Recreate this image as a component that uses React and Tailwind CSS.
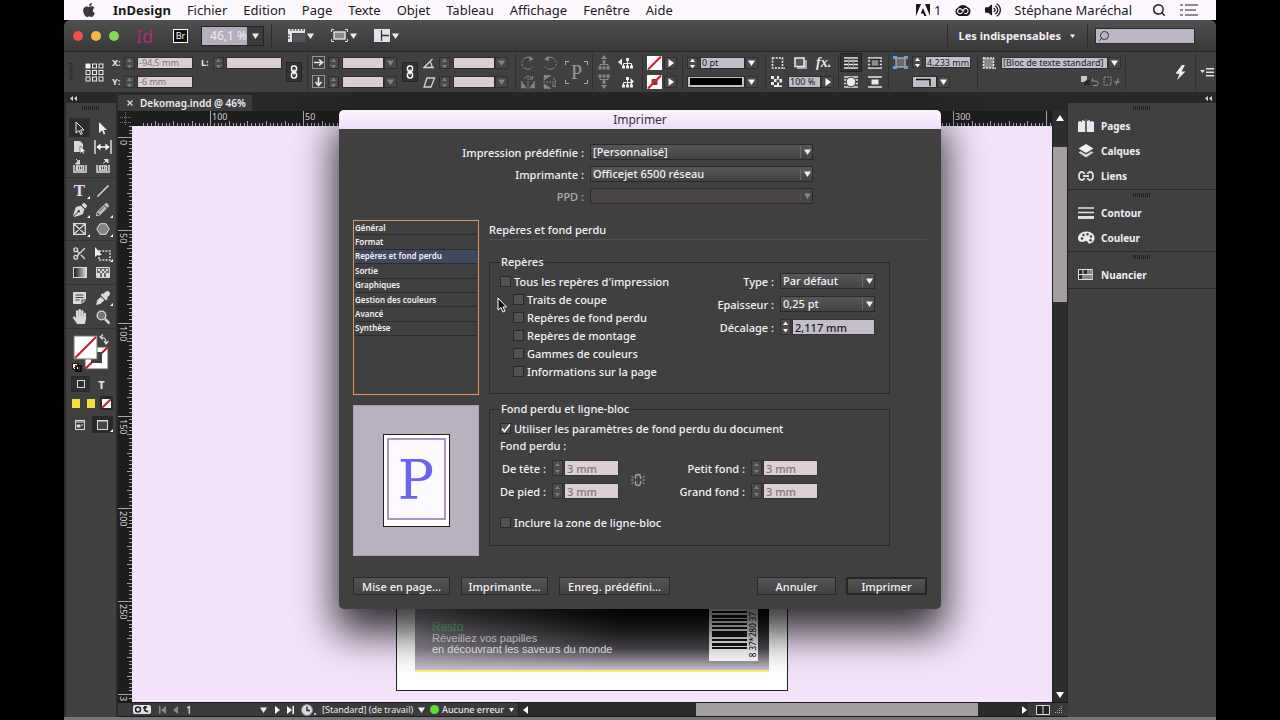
import React from "react";
import { FaApple, FaVolumeUp, FaPenNib, FaPencilAlt, FaHandPaper, FaEyeDropper } from "react-icons/fa";
import { Scissors, Search } from "lucide-react";

/* ---------- small building blocks ---------- */

const Svg = ({ w = 14, h = 14, vb, className = "", children }) => (
  <svg width={w} height={h} viewBox={vb || `0 0 ${w} ${h}`} className={"block shrink-0 " + className} aria-hidden="true">
    {children}
  </svg>
);

const Down = ({ className = "fill-[#f1ecf3]" }) => (
  <Svg w={7} h={6} className={className}><path d="M0 0.5h7L3.5 6z" /></Svg>
);

const Stepper = ({ dim, label, tall }) => (
  <div className={"flex w-[11px] shrink-0 flex-col gap-px border border-[#2e2e2e] bg-[#4a4a4a] " + (tall ? "h-4" : "h-3")}>
    {["M0 4h5L2.5 0.5z", "M0 1h5L2.5 4.5z"].map((d, i) => (
      <button key={d} type="button" aria-label={`${label} ${i ? "moins" : "plus"}`} className="flex flex-1 items-center justify-center">
        <Svg w={5} h={5} className={dim ? "fill-[#7d7d7d]" : "fill-white"}><path d={d} /></Svg>
      </button>
    ))}
  </div>
);

const Field = ({ label, value = "", dim, className = "" }) => (
  <input
    aria-label={label}
    defaultValue={value}
    className={
      "h-3 min-w-0 rounded-none border border-[#2f2d30] px-px text-[9px] leading-none outline-none " +
      (dim ? "bg-[#dccfd3] text-[#7e747e] " : "bg-[#c4bdcb] text-[#1b1b1b] ") + className
    }
  />
);

const ArrowBtn = ({ label, dim, right }) => (
  <button type="button" aria-label={label} className="flex h-3 w-[13px] shrink-0 items-center justify-center border border-[#303030] bg-[#484848]">
    {right ? (
      <Svg w={6} h={8} className="fill-white"><path d="M0.5 0v8L6 4z" /></Svg>
    ) : (
      <Down className={dim ? "fill-[#858085]" : "fill-white"} />
    )}
  </button>
);

const Combo = ({ label, value, dim, width = "w-[55px]", right }) => (
  <div className={"flex shrink-0 " + width}>
    <Field label={label} value={value} dim={dim} className="flex-1" />
    <ArrowBtn label={`${label} options`} dim={dim} right={right} />
  </div>
);

const Section = ({ className = "", children }) => (
  <div className={"flex h-9 shrink-0 items-center border-l border-[#2f2f2f] " + className}>{children}</div>
);
const Col = ({ children }) => <div className="flex flex-col gap-[7px]">{children}</div>;
const Row = ({ children, className = "gap-[2px]" }) => <div className={"flex h-3 items-center " + className}>{children}</div>;

const ChainBtn = ({ label }) => (
  <button type="button" aria-label={label} className="flex h-5 w-4 shrink-0 items-center justify-center border border-[#262626] bg-[#333]">
    <Svg w={8} h={14} className="fill-none stroke-white">
      <rect x="1.5" y="1" width="5" height="5.5" rx="2.2" strokeWidth="1.5" />
      <rect x="1.5" y="7.5" width="5" height="5.5" rx="2.2" strokeWidth="1.5" />
      <path d="M4 4.5v5" strokeWidth="1.5" />
    </Svg>
  </button>
);

/* ---------- menu bar ---------- */

const MENUS = ["Fichier", "Edition", "Page", "Texte", "Objet", "Tableau", "Affichage", "Fenêtre", "Aide"];

function MenuBar() {
  return (
    <header className="flex h-5 shrink-0 items-center bg-[#fdf8fe] pr-[18px] pl-[17px] text-[13px] leading-none text-[#1a1a1a]">
      <FaApple className="h-4 w-4 shrink-0 text-[#3a3a3a]" />
      <nav className="ml-4 flex items-center gap-4">
        <a href="#app" className="font-bold">InDesign</a>
        {MENUS.map((m) => <a key={m} href={"#" + m}>{m}</a>)}
      </nav>
      <div className="ml-auto flex items-center gap-[13px]">
        <span className="flex items-center gap-1">
          <Svg w={14} h={12}>
            <path d="M0 0h5L0 12zM9 0h5v12zM7 4l3.500 8h-2.300l-1-2.400h-2.500z" fill="#1a1a1a" />
          </Svg>
          1
        </span>
        <Svg w={18} h={13} className="fill-none stroke-[#1a1a1a]">
          <path d="M5.500 12A4.500 4.500 0 0 1 4 3.500 6 6 0 0 1 13.500 3 4.700 4.700 0 0 1 12.500 12z" fill="#1a1a1a" stroke="none" />
          <path d="M10 7.500L7.500 5.300a2.400 2.400 0 1 0 0 3.700l1-.8M8 7l2-1.900a2.500 2.500 0 1 1 .5 4.200" stroke="#fdf8fe" strokeWidth="1.100" />
        </Svg>
        <FaVolumeUp className="h-4 w-4" />
        <span>Stéphane Maréchal</span>
      </div>
      <Search className="ml-5 h-[14px] w-[14px]" strokeWidth={2.5} />
      <Svg w={18} h={12} className="ml-[14px] fill-[#8f8a93]">
        <path d="M0 0h3v2H0zM5 0h13v2H5zM0 5h3v2H0zM5 5h11v2H5zM0 10h3v2H0zM5 10h13v2H5z" />
      </Svg>
    </header>
  );
}

/* ---------- application bar ---------- */

function AppBar() {
  return (
    <div className="flex h-8 shrink-0 items-center rounded-t-md border-b border-[#262626] bg-linear-to-b from-[#505050] to-[#383838] pr-[21px] pl-[9px]">
      <div className="flex gap-2">
        <button aria-label="Fermer" type="button" className="h-[10px] w-[10px] rounded-full bg-[#f0514c]" />
        <button aria-label="Réduire" type="button" className="h-[10px] w-[10px] rounded-full bg-[#f5b745]" />
        <button aria-label="Agrandir" type="button" className="h-[10px] w-[10px] rounded-full bg-[#83d95b]" />
      </div>
      <span className="ml-[17px] w-[37px] text-[18px] leading-none text-[#b02c74]">Id</span>
      <button type="button" className="flex h-[14px] w-[15px] items-center justify-center border border-white bg-[#111] text-[9px] leading-none text-white">Br</button>
      <div className="ml-[13px] flex h-5 w-[63px] border border-[#232323]">
        <input aria-label="Zoom" defaultValue="46,1 %" className="w-0 flex-1 bg-[#b5aebd] text-right text-[12px] leading-none text-[#eee9f2] outline-none" />
        <button type="button" aria-label="Liste des zooms" className="flex w-4 items-center justify-center bg-[#3c3c3c]"><Down /></button>
      </div>
      <div className="ml-[7px] flex h-6 items-center gap-[17px] border-l border-[#2c2c2c] pl-4">
        <button type="button" aria-label="Options d'affichage" className="flex items-center gap-[2px]">
          <Svg w={17} h={13}>
            <path d="M0 0h17v4H4v9H0z" fill="#e6e1ea" />
            <path d="M5 5h12v8H5z" fill="#57555a" />
            <path d="M3 0v2M6 0v2M9 0v2M12 0v2M15 0v2M0 6h2M0 9h2" stroke="#333" />
          </Svg>
          <Down />
        </button>
        <button type="button" aria-label="Mode d'écran" className="flex items-center gap-[2px]">
          <Svg w={17} h={13} className="fill-none stroke-[#e6e1ea]">
            <path d="M0.500 3V0.500H3M14 0.500h2.500V3M16.500 10v2.500H14M3 12.500H0.500V10" />
            <rect x="3" y="3" width="11" height="7" fill="#8a878d" strokeWidth="1.400" />
          </Svg>
          <Down />
        </button>
        <button type="button" aria-label="Réorganiser les documents" className="flex items-center gap-[2px]">
          <Svg w={16} h={13}>
            <path d="M0 0h16v13H0z" fill="#e6e1ea" />
            <path d="M7.500 1v11M8 6.500h7" stroke="#333" strokeWidth="1.300" />
          </Svg>
          <Down />
        </button>
      </div>
      <div className="ml-auto flex h-6 items-center border-l border-[#2c2c2c] pl-[11px]">
        <button type="button" className="flex items-center gap-[9px] text-[11px] leading-none font-bold text-[#f3eff5]">
          Les indispensables
          <Svg w={5} h={4} className="fill-white"><path d="M0 0.500h5L2.500 4z" /></Svg>
        </button>
      </div>
      <div className="ml-3 flex h-6 items-center border-l border-[#2c2c2c] pl-[7px]">
        <label className="flex h-4 w-[100px] items-center border border-[#2b2b2b] bg-[#bcb5c4] pl-[2px]">
          <Search className="h-3 w-3 -scale-x-100 text-[#333]" strokeWidth={2} />
          <input aria-label="Rechercher" className="w-0 flex-1 bg-transparent text-[10px] outline-none" />
        </label>
      </div>
    </div>
  );
}

/* ---------- control bar ---------- */

const Tree = ({ dim, arrow }) => (
  <Svg w={16} h={12} className={dim ? "fill-[#8b878c] stroke-[#8b878c]" : "fill-[#f3eef5] stroke-[#f3eef5]"}>
    <path d="M9.500 3v3M5.500 9V6.500h8V9M9.500 6v3" fill="none" />
    <path d="M8 1h3v3H8zM4 8.500h3v3H4zM8 8.500h3v3H8zM12 8.500h3v3h-3z" stroke="none" />
    {arrow === "left" && <path d="M0 5l4-3.500v7z" stroke="none" />}
    {arrow === "right" && <path d="M16 5.500l-3.500-3.500v7z" stroke="none" />}
  </Svg>
);

const TreeUp = ({ flip }) => (
  <Svg w={12} h={15} className={"fill-[#8b878c] stroke-[#8b878c] " + (flip ? "rotate-180" : "")}>
    <path d="M6 5v4M2 12V9.500h8V12" fill="none" />
    <path d="M3 4l3-4 3 4zM4.500 5.500h3v3h-3zM0.500 11.500h3v3h-3zM4.500 11.500h3v3h-3zM8.500 11.500h3v3h-3z" stroke="none" />
  </Svg>
);

const Rotate = ({ flip }) => (
  <Svg className={"fill-none stroke-[#8b878c] " + (flip ? "" : "-scale-x-100")}>
    <path d="M4 2.300A6 6 0 1 1 2 10.500" strokeDasharray="8 1.500 2 1.500 2 1.500" />
    <path d="M5.500 0L1.500 3l4 2.500z" fill="#8b878c" stroke="none" />
  </Svg>
);

const Flip = ({ vertical }) => (
  <Svg className={"fill-[#8b878c] stroke-[#8b878c] " + (vertical ? "rotate-90" : "")}>
    <path d="M7 3v11" strokeDasharray="2 1" fill="none" />
    <path d="M0.500 13V6l4.500 7zM13.500 13V6l-4.500 7z" strokeWidth="0.600" />
    <path d="M3 4A4.500 4.500 0 0 1 11 3.500M11.500 1v3h-3" fill="none" />
  </Svg>
);

const NoneSwatch = ({ dot }) => (
  <button type="button" aria-label={dot ? "Contour" : "Fond"} className="shrink-0">
    <Svg w={15} h={14}>
      <path d="M0 0h15v14H0z" fill="#fff" />
      <path d="M1 13.500L14 0.500" stroke="#d0182c" strokeWidth="2" />
      {dot && <path d="M5 4.500h5v5H5z" fill="#8d3a46" stroke="#d0182c" />}
    </Svg>
  </button>
);

const WrapIcon = ({ kind }) => (
  <Svg w={14} h={12}>
    <path d="M0 1h14M0 4h14M0 7.500h14M0 11h14" stroke="#e9e4ec" strokeWidth="1.400" />
    {kind === "bars" && <path d="M4.500 1v10M9.500 1v10" stroke="#8f8b91" />}
    {kind === "box" && <path d="M3 2.500h8v7H3z" fill="#8d8a90" stroke="#2a2a2a" strokeWidth="1.500" />}
    {kind === "round" && <circle cx="7" cy="6" r="4.800" fill="#f0ebf3" stroke="#3a3a3a" />}
    {kind === "jump" && <path d="M0 2.500h14v7H0z" fill="#404040" />}
    {kind === "jump" && <path d="M3.500 3.500h7v5h-7z" fill="#efeaf2" />}
  </Svg>
);

const DashedSquare = ({ fill = "none" }) => (
  <Svg w={14} h={12}>
    <rect x="1.500" y="1" width="10" height="10" fill={fill} stroke="#f0ebf3" strokeWidth="1.500" strokeDasharray="2 1.200" />
    <circle cx="13.200" cy="11.200" r="0.800" fill="#fff" />
  </Svg>
);

function ControlBar() {
  const pos = (x, y) => <rect key={`${x}-${y}`} x={1 + x * 6.5} y={1 + y * 6.5} width="4" height="4" fill={x + y === 0 ? "#fff" : "none"} stroke="#eee9f0" />;
  return (
    <div className="flex h-[41px] shrink-0 items-center overflow-hidden border-b border-[#2a2a2a] bg-[#404040] text-[9px] text-[#eae6ec]">
      <div className="flex w-[243px] shrink-0 items-center gap-2 pl-[5px]">
        <Svg w={8} h={18}><path d="M2 0v18" stroke="#262626" strokeDasharray="1 1" strokeWidth="3" /></Svg>
        <Svg w={19} h={19}>{[0, 1, 2].flatMap((x) => [0, 1, 2].map((y) => pos(x, y)))}</Svg>
        <Col>
          <Row><span className="w-[10px] font-bold">X:</span><Stepper dim label="X" /><Field dim label="X" value="-94,5 mm" className="w-14" /></Row>
          <Row><span className="w-[10px] font-bold">Y:</span><Stepper dim label="Y" /><Field dim label="Y" value="-6 mm" className="w-14" /></Row>
        </Col>
        <div className="flex items-center gap-1">
          <Col>
            <Row><span className="w-[10px] font-bold">L:</span><Stepper dim label="L" /><Field dim label="L" className="w-14" /></Row>
            <Row />
          </Col>
          <ChainBtn label="Lier les dimensions" />
        </div>
      </div>

      <Section className="w-[208px] gap-[5px] pl-1">
        <Col>
          {["M2 6.500h7M7 3.500l3.500 3L7 9.500", "M6.500 2v7M3.500 7l3 3.500L9.500 7"].map((d, i) => (
            <Row key={d} className="gap-[3px]">
              <Svg w={13} h={13} className="fill-none stroke-[#eee9f0]">
                <rect x="0.500" y="0.500" width="12" height="12" strokeDasharray="1 1" />
                <path d={d} strokeWidth="1.600" />
              </Svg>
              <Stepper dim label={i ? "Échelle Y" : "Échelle X"} />
              <Combo dim label={i ? "Échelle Y" : "Échelle X"} />
            </Row>
          ))}
        </Col>
        <ChainBtn label="Lier les échelles" />
        <Col>
          {["M11 10.500H1L9.500 2M6.500 5c2 1 2.500 3 2.500 5.500", "M4 2h7.500L8 11H1z"].map((d, i) => (
            <Row key={d} className="gap-[3px]">
              <Svg w={13} h={12} className="fill-none stroke-[#d8d3da]"><path d={d} strokeWidth="1.300" /></Svg>
              <Stepper dim label={i ? "Inclinaison" : "Rotation"} />
              <Combo dim label={i ? "Inclinaison" : "Rotation"} />
            </Row>
          ))}
        </Col>
      </Section>

      <Section className="w-[77px] gap-2 pl-[5px]">
        <Col><Row><Rotate /></Row><Row><Flip /></Row></Col>
        <Col><Row><Rotate flip /></Row><Row><Flip vertical /></Row></Col>
        <div className="relative flex h-[23px] w-[23px] items-center justify-center">
          <Svg w={23} h={23} className="absolute fill-none stroke-[#b5b0b7]"><path d="M0.500 4V0.500H4M19 0.500h3.500V4M22.500 19v3.500H19M4 22.500H0.500V19" /></Svg>
          <span className="font-['Liberation_Serif',serif] text-[20px] leading-none text-[#9c989e]">P</span>
        </div>
      </Section>

      <Section className="w-[50px] gap-2 pl-[5px]">
        <Col><Row><TreeUp /></Row><Row><TreeUp flip /></Row></Col>
        <Col><Row><Tree arrow="left" /></Row><Row><Tree arrow="right" /></Row></Col>
      </Section>

      <Section className="w-10 pl-1">
        <Col>
          <Row><NoneSwatch /><ArrowBtn right label="Options du fond" /></Row>
          <Row><NoneSwatch dot /><ArrowBtn right label="Options du contour" /></Row>
        </Col>
      </Section>

      <Section className="w-[83px] pl-1">
        <Col>
          <Row><Stepper label="Épaisseur du contour" /><Combo label="Épaisseur du contour" value="0 pt" width="w-[58px]" /></Row>
          <Row className="">
            <button type="button" aria-label="Style de contour" className="flex h-3 w-[58px] items-center border border-[#2f2d30] bg-[#c4bdcb] px-[2px]">
              <span className="h-[7px] w-full bg-black" />
            </button>
            <ArrowBtn label="Types de contour" />
          </Row>
        </Col>
      </Section>

      <Section className="w-[73px] pl-[5px]">
        <Col>
          <Row className="gap-[9px]">
            <DashedSquare />
            <Svg w={13} h={12}><path d="M3 3h10v9H3z" fill="#a9a5ac" /><rect x="1" y="1" width="9" height="8.500" fill="#57555a" stroke="#f0ebf3" strokeWidth="1.500" /></Svg>
            <span className="font-['Liberation_Serif',serif] text-[14px] leading-none font-bold italic">fx.</span>
          </Row>
          <Row className="gap-[6px]">
            <Svg w={11} h={11}><path d="M0 0h11v11H0z" fill="#eee" /><path d="M3 0h3v3H3zM8 0h3v3H8zM0 3h3v3H0zM5.500 3.500h3v3h-3zM3 6h3v3H3zM8 6.500h3v3H8zM0 9h3v2H0z" fill="#444" /></Svg>
            <Combo right label="Opacité" value="100 %" width="w-[46px]" />
          </Row>
        </Col>
      </Section>

      <Section className="w-[50px] pl-px">
        <div className="grid grid-cols-2 justify-items-center gap-x-[2px]">
          {["bars", "box", "round", "jump"].map((k, i) => (
            <button key={k} type="button" aria-label={"Habillage " + (i + 1)} className={"flex h-[19px] w-[22px] items-center justify-center " + (i ? "" : "border border-[#222] bg-[#303030]")}>
              <WrapIcon kind={k} />
            </button>
          ))}
        </div>
      </Section>

      <Section className="w-[89px] pl-1">
        <div className="grid grid-cols-[19px_1fr] gap-y-[7px]">
          <Svg w={15} h={13}>
            <rect x="3" y="2" width="9" height="9" fill="#6c696e" stroke="#cfc9d3" />
            <path d="M0 0h4v3H0zM11 0h4v3h-4zM0 10h4v3H0zM11 10h4v3h-4z" fill="#58a6e6" />
          </Svg>
          <Row><Stepper label="Taille d'angle" /><Field label="Taille d'angle" value="4,233 mm" className="w-[46px]" /></Row>
          <span />
          <Row className="">
            <button type="button" aria-label="Forme d'angle" className="h-3 border border-[#2f2d30] bg-[#c4bdcb] px-[2px]">
              <Svg w={19} h={10}><path d="M1 2.500h14V9" fill="none" stroke="#111" strokeWidth="1.500" /></Svg>
            </button>
            <ArrowBtn label="Formes d'angle" />
          </Row>
        </div>
      </Section>

      <Section className="w-[148px] pl-1">
        <Col>
          <Row className="gap-[5px]">
            <DashedSquare fill="#8c888f" />
            <Combo label="Style d'objet" value="[Bloc de texte standard]" width="w-[120px]" />
          </Row>
          <Row className="justify-end gap-1">
            <Svg w={18} h={11}><path d="M0 0h6v6H0z" fill="#c9c4cc" /><path d="M6 4h3v5H3V6" fill="#2a2a2a" /><path d="M12 2l-1 3h4a2 2 0 0 1 0 4.500h-3" fill="none" stroke="#99959b" /></Svg>
            <Svg w={18} h={11}><rect x="1" y="1" width="7" height="8" fill="none" stroke="#99959b" strokeDasharray="2 1" /><path d="M11 6h6M13 9l2.500-7" stroke="#99959b" fill="none" /></Svg>
          </Row>
        </Col>
      </Section>

      <Section className="min-w-0 flex-1 shrink justify-end pr-2">
        <button type="button" aria-label="Application rapide">
          <Svg w={12} h={15} className="fill-[#f3eef5]"><path d="M7 0L0.500 8.500l4 .5L2 15l8.500-8.500H6.500L10 0z" /></Svg>
        </button>
      </Section>
      <Section className="w-[21px] pl-1">
        <button type="button" aria-label="Menu du panneau">
          <Svg w={14} h={9} className="fill-[#e6e1e8]"><path d="M0 2h5L2.500 5zM6 0h8v1.500H6zM6 3.500h8V5H6zM6 7h8v1.500H6z" /></Svg>
        </button>
      </Section>
    </div>
  );
}

/* ---------- tools panel ---------- */

const PanelHead = ({ right }) => (
  <div className={"flex h-[10px] shrink-0 items-center bg-[#282828] px-1 " + (right ? "justify-end" : "")}>
    <button type="button" aria-label="Réduire le panneau"><Svg w={7} h={5} className="fill-[#d9d4db]"><path d="M3 0v5L0 2.500zM7 0v5L4 2.500z" /></Svg></button>
  </div>
);

const Grip = () => (
  <Svg w={18} h={4}><path d="M0 2h18" stroke="#1f1f1f" strokeWidth="4" strokeDasharray="1 1" /></Svg>
);

const ink = "#ddd7e0";
const TOOLS = [
  [
    ["Sélection", true, false, <Svg w={10} h={14}><path d="M1 1v11l3-2.500 1.800 4 1.500-.8L5.700 9H9z" fill="#2f2f2f" stroke="#eee" /></Svg>],
    ["Sélection directe", false, false, <Svg w={10} h={14}><path d="M1 1v11l3-2.500 1.800 4 1.500-.8L5.700 9H9z" fill="#eee" /></Svg>],
    ["Page", false, false, <Svg><path d="M1 1h6l3 3v8H1z" fill={ink} /><path d="M7 6v7.500l2-1.500 1 2 1.500-.6-1-2h2.500z" fill="#fff" stroke="#333" strokeWidth="0.600" /></Svg>],
    ["Écart", false, false, <Svg w={18}><path d="M1 0v14M17 0v14" stroke={ink} strokeWidth="1.500" /><path d="M3 7h12" stroke="#fff" strokeWidth="1.500" /><path d="M2.500 7l4-3.500v7zM15.500 7l-4-3.500v7z" fill="#fff" /></Svg>],
    ["Collecteur", false, false, <Svg><path d="M1 6v7h12V6M3.500 7h7v4h-7z" fill="none" stroke={ink} strokeWidth="1.500" /><path d="M4 9h6" stroke={ink} strokeDasharray="1 1" strokeWidth="3" /><path d="M3 0l2 2M6.500 1v4H2.500z" fill={ink} stroke={ink} /></Svg>],
    ["Placeur", false, false, <Svg><path d="M1 6v7h12V6M3.500 7h7v4h-7z" fill="none" stroke={ink} strokeWidth="1.500" /><path d="M4 9h6" stroke={ink} strokeDasharray="1 1" strokeWidth="3" /><path d="M12 0v4L8 0zM7 4.500l3-2.500" fill={ink} stroke={ink} /></Svg>],
  ],
  [
    ["Texte", false, true, <span className="font-['Liberation_Serif',serif] text-[17px] leading-none font-bold text-[#e3dee6]">T</span>],
    ["Trait", false, false, <Svg w={12} h={12}><path d="M0.500 11.500l11-11" stroke={ink} strokeWidth="1.500" /></Svg>],
    ["Plume", false, true, <FaPenNib className="h-[14px] w-[14px] text-[#ddd7e0]" />],
    ["Crayon", false, true, <FaPencilAlt className="h-[13px] w-[13px] text-[#c4bfc7]" />],
    ["Bloc rectangulaire", false, true, <Svg w={13} h={12}><path d="M0.700 0.700h11.600v10.600H0.700zL12.300 11.300M12.300 0.700L0.700 11.300" fill="none" stroke={ink} strokeWidth="1.300" /></Svg>],
    ["Polygone", false, true, <Svg w={14} h={12}><path d="M4 0.700h6l3.300 5.300L10 11.300H4L0.700 6z" fill="#858287" stroke={ink} /></Svg>],
  ],
  [
    ["Ciseaux", false, false, <Scissors className="h-[15px] w-[15px] text-[#ddd7e0]" strokeWidth={2.2} />],
    ["Transformation libre", false, true, <Svg w={16}><rect x="4" y="4" width="11" height="9" fill="none" stroke={ink} strokeWidth="1.500" strokeDasharray="2 1.200" /><path d="M0 0v10l2.500-2H7z" fill="#eee" /></Svg>],
    ["Dégradé", false, false, <span className="h-[11px] w-[14px] border border-[#ddd7e0] bg-linear-to-r from-[#222] to-[#ddd]" />],
    ["Contour progressif", false, false, <Svg w={14} h={11}><path d="M0.500 0.500h13v10h-13z" fill="#6a676c" stroke={ink} /><path d="M2 2h2v2H2zM6 2h2v2H6zM10 2h2v2h-2zM4 4h2v2H4zM8 4h2v2H8zM1 6h3v4H1zM6 6h2v4H6zM10 6h3v4h-3z" fill={ink} /></Svg>],
  ],
  [
    ["Note", false, false, <Svg w={13} h={13}><path d="M0 1h13v8l-4 4H0z" fill={ink} /><path d="M2.500 4h8M2.500 6.500h8M2.500 9h4M9 13V9h4" stroke="#3f3f3f" fill="none" /></Svg>],
    ["Pipette", false, true, <FaEyeDropper className="h-[14px] w-[14px] text-[#ddd7e0]" />],
    ["Main", false, false, <FaHandPaper className="h-[15px] w-[15px] text-[#ddd7e0]" />],
    ["Loupe", false, false, <Svg><circle cx="5.500" cy="5.500" r="4.300" fill="#77747a" stroke={ink} strokeWidth="1.300" /><path d="M9 9l4.500 4.500" stroke={ink} strokeWidth="2.500" /></Svg>],
  ],
];
const Corner = () => (
  <Svg w={3} h={3} className="absolute right-0 bottom-px fill-white"><path d="M3 0v3H0z" /></Svg>
);

function ToolsPanel() {
  return (
    <aside className="flex w-[54px] shrink-0 flex-col border-x-2 border-[#2a2a2a] bg-[#404040]">
      <PanelHead />
      <div className="flex justify-center pt-[3px] pb-2"><Grip /></div>
      {TOOLS.map((group, g) => (
        <div key={g} className={"grid grid-cols-2 justify-items-center px-[2px] pb-[2px] " + (g ? "border-t border-[#333] pt-[3px]" : "")}>
          {group.map(([label, on, more, icon]) => (
            <button key={label} type="button" aria-label={label} className={"relative flex h-[19px] w-[21px] items-center justify-center " + (on ? "bg-[#2c2c2c]" : "")}>
              {icon}
              {more && <Corner />}
            </button>
          ))}
        </div>
      ))}
      <div className="flex flex-col items-center gap-1 border-t border-[#333] pt-[5px]">
        <button type="button" aria-label="Fond et contour">
          <Svg w={38} h={38}>
            <path d="M13 13h23v22H13z" fill="#fff" stroke="#5a5a5a" />
            <path d="M13 35l23-22" stroke="#c5162c" strokeWidth="2" />
            <path d="M19 18h11v11H19z" fill="#404040" />
            <path d="M2 2h23v23H2z" fill="#fff" stroke="#777" />
            <path d="M3 24L24 3" stroke="#d0182c" strokeWidth="2" />
            <path d="M29 3c4 0 5 2 5 6M32 7l2 3 2.500-3M31 0.500L28 3l3 2.500" fill="none" stroke="#ddd" strokeWidth="1.200" />
            <path d="M0.500 29.500h6v6h-6z" fill="#fff" stroke="#111" /><path d="M4 32h5v5H4z" fill="none" stroke="#111" strokeWidth="2" /><path d="M1 35l5-5" stroke="#d0182c" />
          </Svg>
        </button>
        <div className="grid grid-cols-2 gap-x-[2px]">
          <button type="button" aria-label="Format du conteneur" className="flex h-4 w-[19px] items-center justify-center border border-[#2a2a2a] bg-[#2f2f2f]"><span className="h-2 w-2 border border-[#ddd]" /></button>
          <button type="button" aria-label="Format du texte" className="flex h-4 w-[19px] items-center justify-center text-[11px] leading-none font-extrabold text-[#e3dee6]">T</button>
        </div>
        <div className="flex gap-[2px]">
          <button type="button" aria-label="Couleur" className="flex h-[14px] w-[13px] items-center justify-center"><span className="h-[9px] w-2 bg-[#f2df3a]" /></button>
          <button type="button" aria-label="Dégradé de couleur" className="flex h-[14px] w-[13px] items-center justify-center"><span className="h-[9px] w-2 bg-[#f2df3a]" /></button>
          <button type="button" aria-label="Sans couleur" className="flex h-[14px] w-[13px] items-center justify-center bg-[#2a2a2a]"><Svg w={9} h={9}><path d="M0 0h9v9H0z" fill="#fff" /><path d="M0 9l9-9" stroke="#d0182c" strokeWidth="2" /></Svg></button>
        </div>
        <div className="grid grid-cols-2 gap-x-[2px] pt-[2px]">
          <button type="button" aria-label="Mode normal" className="flex h-[17px] w-[21px] items-center justify-center"><Svg w={10} h={10}><rect x="0.500" y="0.500" width="9" height="9" fill="none" stroke={ink} /><path d="M0 2h10M2 5h3v2H2zM6 5h2" stroke={ink} fill={ink} /></Svg></button>
          <button type="button" aria-label="Mode aperçu" className="relative flex h-[17px] w-[21px] items-center justify-center bg-[#292929]"><Svg w={11} h={10}><rect x="0.500" y="0.500" width="10" height="9" fill="#444" stroke={ink} /><path d="M0 1h11" stroke={ink} /></Svg><Corner /></button>
        </div>
      </div>
    </aside>
  );
}

/* ---------- document window ---------- */

const MM = 1.857;
const range = (a, b, s) => Array.from({ length: Math.floor((b - a) / s) + 1 }, (_, i) => a + i * s);

function RulerTop() {
  return (
    <div className="h-[15px] overflow-hidden bg-[#1d1d1d]">
      <Svg w={2000} h={15}>
        <path d="M2 6.500h11M2 11.500h11M7.500 1v13" stroke="#777" strokeDasharray="1 1" fill="none" />
        {range(-136, 900, 2).map((mm) => {
          const x = Math.round(278 + mm * MM) + 0.5;
          const len = mm % 50 === 0 ? 15 : mm % 10 === 0 ? 5 : 3;
          return <path key={mm} d={`M${x} ${15 - len}v${len}`} stroke="#a9a5ac" />;
        })}
        {range(-100, 300, 50).map((mm) => (
          <text key={mm} x={Math.round(278 + mm * MM) + 2} y="9" fontSize="9" fill="#d6d1d8">{Math.abs(mm)}</text>
        ))}
      </Svg>
    </div>
  );
}

function RulerLeft() {
  return (
    <div className="w-[14px] shrink-0 overflow-hidden bg-[#1d1d1d]">
      <Svg w={14} h={1600}>
        {range(-6, 850, 2).map((mm) => {
          const y = Math.round(12 + mm * MM) - 0.5;
          const len = mm % 50 === 0 ? 14 : mm % 10 === 0 ? 5 : 3;
          return <path key={mm} d={`M${14 - len} ${y}h${len}`} stroke="#a9a5ac" />;
        })}
        {range(0, 250, 50).map((mm) => (
          <text key={mm} fontSize="9" fill="#d6d1d8" transform={`translate(2 ${Math.round(14 + mm * MM)}) rotate(90)`}>{mm}</text>
        ))}
        <text fontSize="9" fill="#d6d1d8" transform="translate(2 570) rotate(90)">3</text>
      </Svg>
    </div>
  );
}

const BARS = [1, 2, 1, 1, 3, 1, 2, 1, 1, 1, 2, 2, 1, 1, 3, 1, 1, 2, 1, 1, 1, 3, 1, 1, 2, 1];

function DocumentPage() {
  return (
    <div className="absolute bottom-[11px] left-[264px] h-[554px] w-[392px] border border-[#222] bg-white px-[18px] pb-[18px]">
      <div className="relative flex h-full flex-col justify-end border-b-2 border-[#fff07a] bg-[linear-gradient(to_top,#c9c2cf_0%,rgba(130,125,135,0.6)_4%,transparent_12%),linear-gradient(to_right,#aaa4ae_0%,#77737a_14%,#2b2b2b_42%,#050505_58%,#050505_100%)] px-[17px] pb-[15px]">
        <div className="font-['Liberation_Sans',Arial,sans-serif] text-[11px] leading-[11px] text-white">
          <p className="text-[12px] text-[#74e0a4]">Resto</p>
          <p>Réveillez vos papilles</p>
          <p>en découvrant les saveurs du monde</p>
        </div>
        <div className="absolute right-[11px] bottom-[9px] flex h-[120px] w-[49px] items-end gap-px bg-white pb-1 pl-[3px]">
          <Svg w={35} h={110}>
            <path d="M0 0h35v104H0z" fill="#fff" />
            {range(0, 25, 1).map((i) => (
              <rect key={i} x="0" y={i * 4} width="35" height={BARS[i] + 1} fill="#161616" />
            ))}
          </Svg>
          <span className="text-[8px] leading-[9px] whitespace-nowrap text-black [writing-mode:sideways-lr]">8 37*280 37</span>
        </div>
      </div>
    </div>
  );
}

function StatusBar() {
  return (
    <div className="flex h-[15px] shrink-0 items-center border-y border-[#1c1c1c] bg-[#3a3a3a] text-[9px] leading-none font-medium whitespace-nowrap text-[#ece7ee]">
      <div className="flex h-full w-[400px] shrink-0 items-center pl-[15px]">
        <Svg w={18} h={9}><rect width="18" height="9" rx="2" fill="#e4dfe7" /><circle cx="5" cy="4.500" r="2.500" fill="none" stroke="#222" strokeWidth="1.500" /><path d="M10 3l4-1M11 5l4 2M12 1v5" stroke="#222" strokeWidth="1.500" /></Svg>
        <button type="button" aria-label="Première page" className="ml-2"><Svg w={7} h={8} className="fill-[#8b878d]"><path d="M0 0h1.500v8H0zM7 0v8L2 4z" /></Svg></button>
        <button type="button" aria-label="Page précédente" className="ml-[7px]"><Svg w={5} h={8} className="fill-[#8b878d]"><path d="M5 0v8L0 4z" /></Svg></button>
        <input aria-label="Numéro de page" defaultValue="1" className="ml-2 w-[74px] bg-transparent text-[10px] leading-none outline-none" />
        <button type="button" aria-label="Liste des pages"><Down /></button>
        <button type="button" aria-label="Page suivante" className="ml-2"><Svg w={5} h={8} className="fill-white"><path d="M0 0v8l5-4z" /></Svg></button>
        <button type="button" aria-label="Dernière page" className="ml-[7px]"><Svg w={7} h={8} className="fill-white"><path d="M5.500 0H7v8H5.500zM0 0v8l5-4z" /></Svg></button>
        <Svg w={16} h={12} className="ml-[7px]"><circle cx="6" cy="6" r="5.500" fill="#ddd7e2" stroke="#8d8991" /><path d="M6 2.500V6.500h3" stroke="#222" strokeWidth="1.300" fill="none" /><circle cx="14" cy="10" r="1" fill="#fff" /></Svg>
        <button type="button" className="flex flex-1 items-center justify-between px-[5px] font-normal">[Standard] (de travail)<Down /></button>
        <button type="button" className="flex shrink-0 items-center gap-[3px] pr-px"><span className="h-[9px] w-[9px] rounded-full bg-[#5fdc35]" />Aucune erreur</button>
        <button type="button" aria-label="Options de contrôle" className="px-1"><Svg w={5} h={4} className="fill-white"><path d="M0 0h5L2.500 4z" /></Svg></button>
      </div>
      <div className="flex h-full flex-1 items-center border-l border-[#1c1c1c] bg-[#2b2b2b]">
        <button type="button" aria-label="Défiler à gauche" className="px-1"><Svg w={5} h={8} className="fill-white"><path d="M5 0v8L0 4z" /></Svg></button>
        <div className="grid h-full flex-1 grid-cols-[163fr_279fr_43fr]"><span /><span className="bg-[#a39e9f]" /></div>
        <button type="button" aria-label="Défiler à droite" className="px-px"><Svg w={5} h={8} className="fill-white"><path d="M0 0v8l5-4z" /></Svg></button>
      </div>
      <button type="button" aria-label="Fractionner la vue" className="ml-2"><Svg w={14} h={10}><path d="M0.500 0.500h13v9h-13zM7 0v10" fill="#222" stroke="#ded9e1" /></Svg></button>
      <Svg w={18} h={9} className="fill-[#aaa6ad]"><path d="M11 1h1v1h-1zM9 3h1v1H9zM11 3h1v1h-1zM7 5h1v1H7zM9 5h1v1H9zM11 5h1v1h-1zM5 7h1v1H5zM7 7h1v1H7zM9 7h1v1H9zM11 7h1v1h-1z" /></Svg>
    </div>
  );
}

function DocumentWindow() {
  return (
    <main className="flex min-w-0 flex-1 flex-col">
      <div className="flex h-[18px] shrink-0 items-end bg-[#282828]">
        <div className="flex h-4 items-center gap-[7px] bg-[#3c3c3c] pr-[6px] pl-[9px] text-[10px] leading-none font-semibold text-[#f1ecf3]">
          <button type="button" aria-label="Fermer l'onglet"><Svg w={6} h={6}><path d="M0.500 0.500l5 5M5.500 0.500l-5 5" stroke="#ddd" strokeWidth="1.300" /></Svg></button>
          <span>Dekomag.indd @ 46%</span>
        </div>
      </div>
      <div className="flex min-h-0 flex-1">
        <div className="flex min-w-0 flex-1 flex-col">
          <RulerTop />
          <div className="flex min-h-0 flex-1">
            <RulerLeft />
            <div className="relative flex-1 overflow-hidden bg-[#f5e3fc]"><DocumentPage /></div>
          </div>
        </div>
        <div className="flex w-4 shrink-0 flex-col items-center border-x border-[#222] bg-[#2e2e2e]">
          <button type="button" aria-label="Défiler vers le haut" className="pt-1 pb-[26px]"><Svg w={8} h={6} className="fill-white"><path d="M0 6h8L4 0z" /></Svg></button>
          <div className="grid w-full flex-1 grid-rows-[153fr_386fr]"><span className="bg-[#a39e9f]" /></div>
          <button type="button" aria-label="Défiler vers le bas" className="pb-1"><Svg w={8} h={6} className="fill-white"><path d="M0 0h8L4 6z" /></Svg></button>
        </div>
      </div>
      <StatusBar />
    </main>
  );
}

/* ---------- right panels ---------- */

const PANELS = [
  [
    ["Pages", <Svg w={16} h={13}><path d="M0 3l2-1 2 1V1l3 1v11H0zM9 2l3-1v2l2-1 2 1v10H9z" fill="#ece6ef" /><path d="M8 0v13" stroke="#8d8991" /></Svg>],
    ["Calques", <Svg w={16} h={14}><path d="M8 0l7.500 4.500L8 9 0.500 4.500z" fill="#f3edf6" /><path d="M0.500 8.500l2-1.200L8 10.600l5.500-3.300 2 1.200L8 13.500z" fill="#d9d3dc" /></Svg>],
    ["Liens", <Svg w={16} h={10} className="fill-none stroke-[#e4dee7]"><path d="M6.500 3C6 1.500 5 1 4 1 2 1 1 2.500 1 5s1 4 3 4c1 0 2-.5 2.500-2M9.500 3C10 1.500 11 1 12 1c2 0 3 1.500 3 4s-1 4-3 4c-1 0-2-.5-2.500-2M5 5h6" strokeWidth="1.800" /></Svg>],
  ],
  [
    ["Contour", <Svg w={16} h={12}><path d="M0 1h16M0 5.500h16" stroke="#e4dee7" strokeWidth="1.500" /><path d="M0 10.500h16" stroke="#e4dee7" strokeWidth="3" /></Svg>],
    ["Couleur", <Svg w={17} h={13}><path d="M8 0.500c5 0 8.500 2.500 8.500 6.500 0 3-2.500 5.500-5 5.500-2 0-1.500-2.500-3.500-2.500-1.500 0-2 1-4 1C1.500 11 0 9.500 0 7.500 0 3.500 3.500 0.500 8 0.500z" fill="#eee8f1" /><circle cx="4" cy="7.500" r="1.300" fill="#404040" /><circle cx="5.500" cy="4" r="1.200" fill="#404040" /><circle cx="9.500" cy="3.200" r="1.200" fill="#404040" /><circle cx="13" cy="5.500" r="1.200" fill="#404040" /><circle cx="12.500" cy="9.200" r="1.200" fill="#404040" /></Svg>],
  ],
  [
    ["Nuancier", <Svg w={15} h={11}><path d="M0.500 0.500h14v10h-14z" fill="#2a2a2a" stroke="#e4dee7" /><path d="M5 0v11M10 0v11M0 5.500h15" stroke="#e4dee7" /><path d="M5.500 6h4v4h-4zM10.500 6h4v4h-4zM10.500 1h4v4h-4z" fill="#8b878d" /></Svg>],
  ],
];

function SidePanels() {
  return (
    <aside className="flex w-[148px] shrink-0 flex-col bg-[#404040]">
      <PanelHead right />
      {PANELS.map((group, i) => (
        <section key={i} className="border-b border-[#2a2a2a] pb-px">
          <div className="flex justify-center py-[3px]"><Grip /></div>
          {group.map(([name, icon]) => (
            <button key={name} type="button" className="flex h-[25px] w-full items-center gap-[6px] pl-[10px] text-left text-[10px] leading-none font-bold text-[#f3eef5]">
              <span className="flex w-[17px]">{icon}</span>
              {name}
            </button>
          ))}
        </section>
      ))}
    </aside>
  );
}

/* ---------- print dialog ---------- */

const TABS = ["Général", "Format", "Repères et fond perdu", "Sortie", "Graphiques", "Gestion des couleurs", "Avancé", "Synthèse"];
const MARKS = ["Traits de coupe", "Repères de fond perdu", "Repères de montage", "Gammes de couleurs", "Informations sur la page"];

const Select = ({ id, value, disabled, className = "" }) => (
  <div className={"relative h-4 " + className}>
    <select id={id} disabled={disabled} defaultValue={value} className={"block h-full w-full appearance-none border border-[#2a2a2a] pr-4 pl-[2px] leading-[14px] outline-none " + (disabled ? "bg-[#484448]" : "bg-linear-to-b from-[#575757] to-[#434343]")}>
      <option>{value}</option>
    </select>
    <span className={"pointer-events-none absolute inset-y-[2px] right-[2px] flex items-center border-l border-[#6a6a6a] pl-[3px] " + (disabled ? "opacity-40" : "")}><Down /></span>
  </div>
);

const Check = ({ label, checked, className = "" }) => (
  <label className={"flex h-[18px] items-center gap-[3px] " + className}>
    <span className="relative flex">
      <input type="checkbox" defaultChecked={checked} className="peer h-[11px] w-[11px] appearance-none border border-[#2a2a2a] bg-[#535153]" />
      <Svg w={12} h={10} className="pointer-events-none absolute bottom-px left-0 hidden fill-none stroke-white peer-checked:block"><path d="M2 5.500l2.500 3L10 1.500" strokeWidth="1.600" /></Svg>
    </span>
    {label}
  </label>
);

const Mm = ({ id, label, value, disabled, lw, iw }) => (
  <div className="flex h-4 items-center">
    <label htmlFor={id} className={"text-right whitespace-nowrap " + lw}>{label}</label>
    <div className="ml-[6px] flex gap-px">
      <Stepper tall dim={disabled} label={label} />
      <input id={id} disabled={disabled} defaultValue={value} className={"h-4 rounded-none border border-[#333] pl-[2px] leading-none outline-none " + iw + (disabled ? " bg-[#dccfd3] text-[#7e747e]" : " bg-[#c4bdcb] text-[#1b1b1b]")} />
    </div>
  </div>
);

const Btn = ({ children, strong, className }) => (
  <button type="button" className={"flex h-[18px] items-center justify-center bg-linear-to-b from-[#555] to-[#424242] leading-none " + (strong ? "border-2 border-[#262626] " : "border border-[#2a2a2a] ") + className}>{children}</button>
);

function PrintDialog() {
  return (
    <div role="dialog" aria-label="Imprimer" className="absolute top-[110px] left-1/2 w-[602px] -translate-x-1/2 rounded-[5px] bg-[#404040] text-[11px] leading-none font-medium text-[#f5f1f7] shadow-[0_20px_40px_4px_rgba(0,0,0,0.8)]">
      <h1 className="flex h-[19px] items-center justify-center rounded-t-[5px] bg-linear-to-b from-[#fdf4fe] to-[#eedcf8] text-[12px] font-normal text-[#333]">Imprimer</h1>
      <div className="px-[14px] pt-[15px] pb-[14px]">
        <div className="flex flex-col gap-[6px]">
          {[
            ["preset", "Impression prédéfinie :", "[Personnalisé]", false],
            ["printer", "Imprimante :", "Officejet 6500 réseau", false],
            ["ppd", "PPD :", "", true],
          ].map(([id, label, value, off]) => (
            <div key={id} className="flex items-center gap-[6px]">
              <label htmlFor={id} className={"w-[231px] text-right " + (off ? "text-[#b3aeb5]" : "")}>{label}</label>
              <Select id={id} value={value} disabled={off} className="w-[223px]" />
            </div>
          ))}
        </div>

        <div className="mt-4 flex gap-[10px]">
          <div className="flex w-[126px] shrink-0 flex-col gap-[10px]">
            <div className="h-[175px] border border-[#e0955c] px-px text-[8px] font-semibold">
              <ul className="grid h-[115px] grid-rows-8">
                {TABS.map((t) => (
                  <li key={t} className={"border-b border-[#2c2c2c] " + (t === "Repères et fond perdu" ? "bg-[#41475e]" : "")}>
                    <button type="button" className="flex h-full w-full items-center text-left leading-none">{t}</button>
                  </li>
                ))}
              </ul>
            </div>
            <div className="flex h-[151px] items-center justify-center border border-[#a79fad] bg-[#b9b1bf]">
              <div className="flex h-[93px] w-[67px] border border-[#222] bg-white px-[3px] pt-[3px] pb-[6px]">
                <div className="flex flex-1 items-center justify-center border-2 border-[#b08fd0] bg-[#fdfaff] pt-1 font-['DejaVu_Serif',serif] text-[54px] leading-none font-normal text-[#6d63ee]">P</div>
              </div>
            </div>
          </div>

          <div className="min-w-0 flex-1">
            <h2 className="flex h-5 items-center border-b border-[#4f4f4f]">Repères et fond perdu</h2>
            <fieldset className="mt-[14px] h-[140px] w-[401px] border border-[#2b2b2b] pr-[14px] pl-[10px]">
              <legend className="h-4 px-px leading-4">Repères</legend>
              <div className="flex items-start justify-between">
                <div className="pt-[2px]">
                  <Check label="Tous les repères d'impression" />
                  {MARKS.map((m) => <Check key={m} label={m} className="pl-[13px]" />)}
                </div>
                <div className="flex flex-col items-end gap-[7px] pt-[3px]">
                  <div className="flex items-center gap-[6px]"><label htmlFor="type">Type :</label><Select id="type" value="Par défaut" className="w-[95px]" /></div>
                  <div className="flex items-center gap-[6px]"><label htmlFor="weight">Epaisseur :</label><Select id="weight" value="0,25 pt" className="w-[95px]" /></div>
                  <Mm id="offset" label="Décalage :" value="2,117 mm" lw="w-[60px]" iw="w-[83px]" />
                </div>
              </div>
            </fieldset>
            <fieldset className="mt-[7px] h-[145px] w-[401px] border border-[#2b2b2b] pl-[10px]">
              <legend className="h-4 px-px leading-4">Fond perdu et ligne-bloc</legend>
              <div className="pt-[2px]">
                <Check checked label="Utiliser les paramètres de fond perdu du document" />
                <p className="h-[18px] leading-[18px]">Fond perdu :</p>
                <div className="mt-[5px] flex items-center gap-3">
                  <div className="flex flex-col gap-[7px]">
                    <Mm disabled id="top" label="De tête :" value="3 mm" lw="w-[46px]" iw="w-[55px]" />
                    <Mm disabled id="bottom" label="De pied :" value="3 mm" lw="w-[46px]" iw="w-[55px]" />
                  </div>
                  <button type="button" aria-label="Uniformiser les valeurs">
                    <Svg w={14} h={14} className="fill-none stroke-[#a9a5ab]"><path d="M4.500 6V4a2.500 2.500 0 0 1 5 0v2M4.500 8v2a2.500 2.500 0 0 0 5 0V8" strokeWidth="1.300" /><path d="M0.500 3.500l2 1M0 7h2.500M0.500 10.500l2-1M13.500 3.500l-2 1M14 7h-2.500M13.500 10.500l-2-1" /></Svg>
                  </button>
                  <div className="flex flex-col gap-[7px] pl-5">
                    <Mm disabled id="inner" label="Petit fond :" value="3 mm" lw="w-[68px]" iw="w-[55px]" />
                    <Mm disabled id="outer" label="Grand fond :" value="3 mm" lw="w-[68px]" iw="w-[55px]" />
                  </div>
                </div>
                <Check label="Inclure la zone de ligne-bloc" className="mt-[14px]" />
              </div>
            </fieldset>
          </div>
        </div>

        <div className="mt-[21px] flex">
          <div className="flex gap-[11px]">
            <Btn className="w-[97px]">Mise en page...</Btn>
            <Btn className="w-[87px]">Imprimante...</Btn>
            <Btn className="w-[111px]">Enreg. prédéfini...</Btn>
          </div>
          <div className="ml-auto flex gap-[10px]">
            <Btn className="w-[79px]">Annuler</Btn>
            <Btn strong className="w-[81px]">Imprimer</Btn>
          </div>
        </div>
      </div>
      <Svg w={10} h={16} className="absolute top-[187px] left-[158px]"><path d="M1 1v12l3-2.500 2 4.500 2-1-2-4h3.500z" fill="#111" stroke="#fff" /></Svg>
    </div>
  );
}

export default function App() {
  return (
    <div className="flex h-screen flex-col bg-black px-16 font-['Noto_Sans','Open_Sans',sans-serif]">
      <MenuBar />
      <AppBar />
      <ControlBar />
      <div className="flex min-h-0 flex-1 border-b-[3px] border-[#77757a] bg-[#2a2a2a]">
        <ToolsPanel />
        <DocumentWindow />
        <SidePanels />
      </div>
      <PrintDialog />
    </div>
  );
}
